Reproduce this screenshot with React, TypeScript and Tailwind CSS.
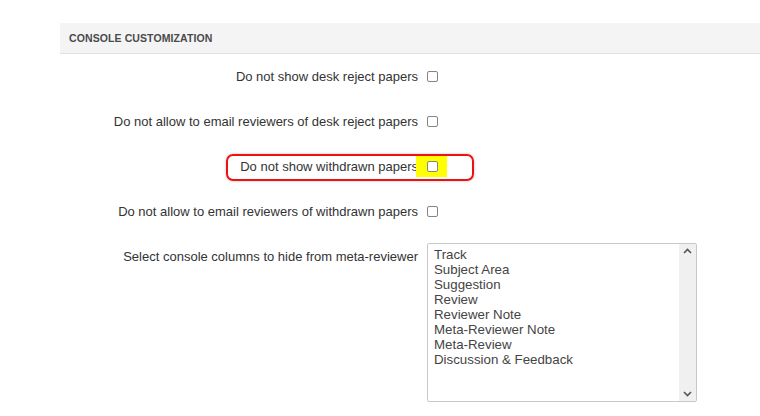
import React from 'react';

const columns = [
  'Track',
  'Subject Area',
  'Suggestion',
  'Review',
  'Reviewer Note',
  'Meta-Reviewer Note',
  'Meta-Review',
  'Discussion & Feedback',
];

const Checkbox: React.FC = () => (
  <span className="inline-block w-[11px] h-[11px] rounded-[2px] border border-[#858585] bg-white" />
);

const CheckRow: React.FC<{ label: string; highlight?: boolean }> = ({ label, highlight }) => (
  <div className="relative flex items-center h-[45px]">
    <div className="w-[367px] pr-[9px] text-right text-[13px] text-[#333]">{label}</div>
    <div className="relative flex items-center">
      {highlight && <span className="absolute left-[-11px] top-[-5px] w-[31px] h-[21px] bg-[#ffff00]" />}
      <span className="relative flex"><Checkbox /></span>
    </div>
    {highlight && (
      <span className="absolute left-[166px] top-[10px] w-[248px] h-[27px] rounded-[7px] border-2 border-[#ee1111] shadow-[0_0_3px_rgba(0,0,0,0.25)] pointer-events-none" />
    )}
  </div>
);

export default function App() {
  return (
    <div className="w-[760px] h-[416px] bg-white overflow-hidden" style={{ fontFamily: '"Liberation Sans", Arial, sans-serif' }}>
      <div className="pt-[23px] pl-[60px]">
        <div className="h-[31px] bg-[#f4f4f4] border-b border-[#e2e2e2] flex items-center pl-[9px] pt-[2px]">
          <span className="text-[10.5px] font-bold text-[#4a4a4a] tracking-[0.1px]">CONSOLE CUSTOMIZATION</span>
        </div>

        <CheckRow label="Do not show desk reject papers" />
        <CheckRow label="Do not allow to email reviewers of desk reject papers" />
        <CheckRow label="Do not show withdrawn papers" highlight />
        <CheckRow label="Do not allow to email reviewers of withdrawn papers" />

        <div className="flex pt-[9px]">
          <div className="w-[367px] pr-[9px] pt-[4px] text-right text-[13px] text-[#333]">
            Select console columns to hide from meta-reviewer
          </div>
          <div className="w-[270px] h-[159px] border border-[#c8c8c8] rounded-[2px] flex bg-white">
            <div className="flex-1 pl-[6px] pt-[3px] text-[13.3px] leading-[15px] text-[#444]">
              {columns.map(c => (
                <div key={c}>{c}</div>
              ))}
            </div>
            <div className="w-[17px] bg-[#f0f0f0] flex flex-col justify-between items-center py-[4px]">
              <svg width="9" height="6" viewBox="0 0 9 6">
                <path d="M1 5 L4.5 1.5 L8 5" fill="none" stroke="#555" strokeWidth="1.6" />
              </svg>
              <svg width="9" height="6" viewBox="0 0 9 6">
                <path d="M1 1 L4.5 4.5 L8 1" fill="none" stroke="#555" strokeWidth="1.6" />
              </svg>
            </div>
          </div>
        </div>
      </div>
    </div>
  );
}
